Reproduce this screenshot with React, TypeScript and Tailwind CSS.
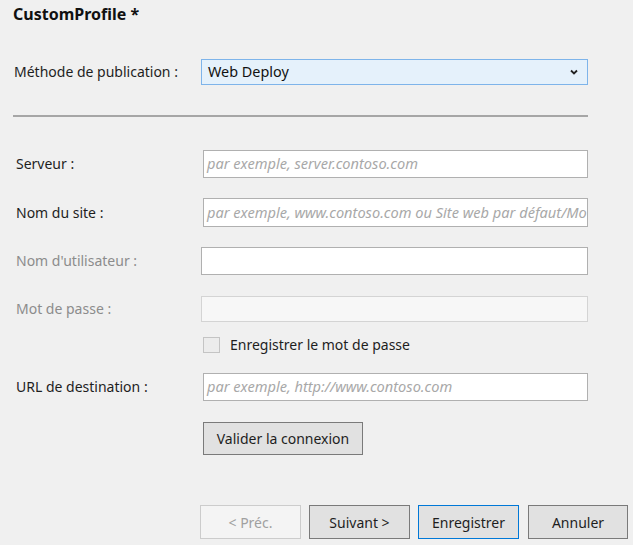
import React from "react";

const font = { fontFamily: '"Noto Sans", "Open Sans", sans-serif' };

function Row({
  label,
  gray,
  children,
  className,
}: {
  label: string;
  gray?: boolean;
  children: React.ReactNode;
  className?: string;
}) {
  return (
    <div className={"flex items-center " + (className ?? "")}>
      <div
        className={
          "w-[188px] pl-[3px] text-[14px] leading-[20px] " +
          (gray ? "text-[#8c8c8c]" : "text-[#1e1e1e]")
        }
      >
        {label}
      </div>
      {children}
    </div>
  );
}

function TextBox({ placeholder, h = 28 }: { placeholder?: string; h?: number }) {
  return (
    <div
      className="w-[385px] bg-white border border-[#b0b0b0] flex items-center pl-[3px] overflow-hidden whitespace-nowrap"
      style={{ height: h }}
    >
      {placeholder && (
        <span className="italic text-[14.6px] text-[#a8a8a8]">{placeholder}</span>
      )}
    </div>
  );
}

export default function App() {
  return (
    <div className="w-[633px] h-[545px] bg-[#f0f0f0] overflow-hidden pl-[13px]" style={font}>
      <div className="pt-[4px] text-[16px] leading-[20px] font-bold text-[#111]">CustomProfile *</div>

      <div className="mt-[35px] flex items-center">
        <div className="w-[188px] pl-[1px] text-[14px] leading-[20px] text-[#1e1e1e]">Méthode de publication :</div>
        <div className="w-[387px] h-[26px] border border-[#7eb4ea] bg-[#e5f1fb] flex items-center justify-between pl-[6px] pr-[9px]">
          <span className="text-[14.4px] text-[#111]">Web Deploy</span>
          <svg width="8" height="6" viewBox="0 0 8 6">
            <path d="M1 1.5 L4 4.5 L7 1.5" fill="none" stroke="#222" strokeWidth="1.8" />
          </svg>
        </div>
      </div>

      <div className="mt-[30px] w-[575px] h-[2px] bg-[#a6a6a6]" />

      <Row label="Serveur :" className="mt-[33px]">
        <div className="ml-[2px]">
          <TextBox placeholder="par exemple, server.contoso.com" h={28} />
        </div>
      </Row>

      <Row label="Nom du site :" className="mt-[20px]">
        <div className="ml-[2px]">
          <TextBox placeholder="par exemple, www.contoso.com ou Site web par défaut/Mo" h={29} />
        </div>
      </Row>

      <Row label="Nom d'utilisateur :" gray className="mt-[20px]">
        <div className="w-[387px] h-[28px] bg-white border border-[#b0b0b0]" />
      </Row>

      <Row label="Mot de passe :" gray className="mt-[21px]">
        <div className="w-[387px] h-[26px] bg-[#f7f7f7] border border-[#d4d4d4]" />
      </Row>

      <div className="mt-[15px] h-[16px] flex items-center pl-[190px]">
        <div className="w-[17px] h-[16px] bg-[#ececec] border border-[#c4c4c4]" />
        <span className="ml-[10px] text-[14px] leading-[16px] text-[#1e1e1e]">Enregistrer le mot de passe</span>
      </div>

      <Row label="URL de destination :" className="mt-[20px]">
        <div className="ml-[2px]">
          <TextBox placeholder="par exemple, http://www.contoso.com" h={28} />
        </div>
      </Row>

      <div className="mt-[21px] pl-[190px]">
        <button className="w-[160px] h-[33px] bg-[#e1e1e1] border border-[#7a7a7a] text-[14px] text-[#1e1e1e]">
          Valider la connexion
        </button>
      </div>

      <div className="mt-[50px] flex pl-[187px]">
        <button className="w-[101px] h-[34px] bg-[#f4f4f4] border border-[#cccccc] text-[14px] text-[#a0a0a0]">
          &lt; Préc.
        </button>
        <button className="ml-[8px] w-[101px] h-[34px] bg-[#e1e1e1] border border-[#7a7a7a] text-[14px] text-[#1e1e1e]">
          Suivant &gt;
        </button>
        <button className="ml-[8px] w-[101px] h-[34px] bg-[#e1e1e1] border border-[#0078d7] text-[14px] text-[#1e1e1e]">
          Enregistrer
        </button>
        <button className="ml-[9px] w-[100px] h-[34px] bg-[#e1e1e1] border border-[#7a7a7a] text-[14px] text-[#1e1e1e]">
          Annuler
        </button>
      </div>
    </div>
  );
}
